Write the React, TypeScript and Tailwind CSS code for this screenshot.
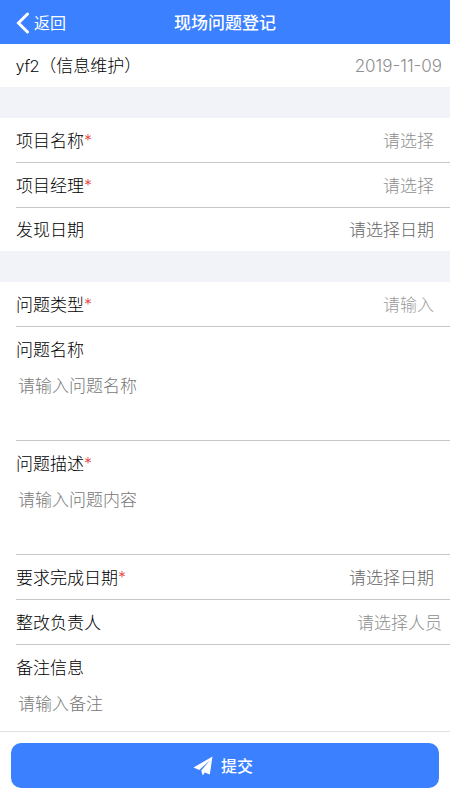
import type { ReactNode } from "react";

const control =
  "min-w-0 flex-1 appearance-none bg-transparent text-right [text-align-last:right] outline-none";

function Label({ id, text, required }: { id: string; text: string; required?: boolean }) {
  return (
    <label htmlFor={id} className="flex shrink-0 text-black">
      {text}
      {required && <span className="text-base leading-[22px] text-[#e64340]">*</span>}
    </label>
  );
}

type FieldProps = {
  id: string;
  label: string;
  required?: boolean;
  children: ReactNode;
};

function Row({ id, label, required, children }: FieldProps) {
  return (
    <div className="flex h-[45px] items-center border-b border-[#c8c7cc] pt-px pr-4 last:h-[43px] last:border-b-0 last:pt-0">
      <Label id={id} text={label} required={required} />
      {children}
    </div>
  );
}

function SelectRow({ id, label, required }: Omit<FieldProps, "children">) {
  return (
    <Row id={id} label={label} required={required}>
      <select id={id} className={`${control} text-[#8e8e8e]`} defaultValue="">
        <option value="">请选择</option>
      </select>
    </Row>
  );
}

function DateRow({ id, label, required }: Omit<FieldProps, "children">) {
  return (
    <Row id={id} label={label} required={required}>
      <input id={id} type="text" placeholder="请选择日期" className={`${control} placeholder:text-[#666666]`} />
    </Row>
  );
}

function TextBlock({
  id,
  label,
  required,
  placeholder,
}: Omit<FieldProps, "children"> & { placeholder: string }) {
  return (
    <div className="flex h-[114px] flex-col border-b border-[#c8c7cc] pt-[11px] pr-4 last:h-[86px] last:border-b-0">
      <Label id={id} text={label} required={required} />
      <textarea
        id={id}
        placeholder={placeholder}
        className="mt-3 min-h-0 flex-1 resize-none overflow-hidden bg-transparent pl-0.5 outline-none placeholder:text-[#777777]"
      />
    </div>
  );
}

export default function App() {
  return (
    <div className="flex min-h-screen flex-col bg-white font-['Inter','Noto_Sans_CJK_SC',sans-serif] text-[17px] leading-6 font-light">
      <header className="grid h-11 grid-cols-[1fr_auto_1fr] items-center bg-[#3a80ff] px-4 pt-px text-white">
        <button type="button" className="flex items-center gap-1 justify-self-start text-base font-normal">
          <svg width="14" height="22" viewBox="0 0 14 22" fill="none" stroke="currentColor" strokeWidth="3" aria-hidden="true">
            <path d="M11.5 2 2.5 11 11.5 20" strokeLinejoin="miter" strokeLinecap="round" />
          </svg>
          返回
        </button>
        <h1 className="font-medium">现场问题登记</h1>
      </header>

      <main className="flex-1">
        <div className="flex h-[43px] items-center justify-between pr-2 pl-4">
          <span className="font-['Roboto','Noto_Sans_CJK_SC',sans-serif] text-black">yf2（信息维护）</span>
          <time dateTime="2019-11-09" className="text-[#8e8e8e]">
            2019-11-09
          </time>
        </div>

        <div className="h-[31px] bg-[#f2f3f8]" />

        <section className="pl-4">
          <SelectRow id="project" label="项目名称" required />
          <SelectRow id="manager" label="项目经理" required />
          <DateRow id="found" label="发现日期" />
        </section>

        <div className="h-[31px] bg-[#f2f3f8]" />

        <section className="pl-4">
          <Row id="type" label="问题类型" required>
            <input id="type" type="text" placeholder="请输入" className={`${control} placeholder:text-[#9a9a9a]`} />
          </Row>
          <TextBlock id="name" label="问题名称" placeholder="请输入问题名称" />
          <TextBlock id="detail" label="问题描述" required placeholder="请输入问题内容" />
          <DateRow id="deadline" label="要求完成日期" required />
          <div className="flex h-[45px] items-center border-b border-[#c8c7cc] pt-px pr-2">
            <Label id="owner" text="整改负责人" />
            <select id="owner" className={`${control} text-[#8e8e8e]`} defaultValue="">
              <option value="">请选择人员</option>
            </select>
          </div>
          <TextBlock id="remark" label="备注信息" placeholder="请输入备注" />
        </section>
      </main>

      <footer className="border-t border-[#e0e0e0] px-[11px] pt-[11px] pb-3">
        <button
          type="submit"
          className="flex h-[45px] w-full items-center justify-center gap-2 rounded-[10px] bg-[#3a80ff] pr-1 text-base font-medium text-white"
        >
          <svg width="20" height="20" viewBox="0 0 20 20" fill="currentColor" aria-hidden="true">
            <path d="M19.5 0.5 0.5 11.5 6.3 14 17 4.2 8.2 14.6 9.8 19.6 11.8 16.4 16.8 18.6Z" />
          </svg>
          提交
        </button>
      </footer>
    </div>
  );
}
